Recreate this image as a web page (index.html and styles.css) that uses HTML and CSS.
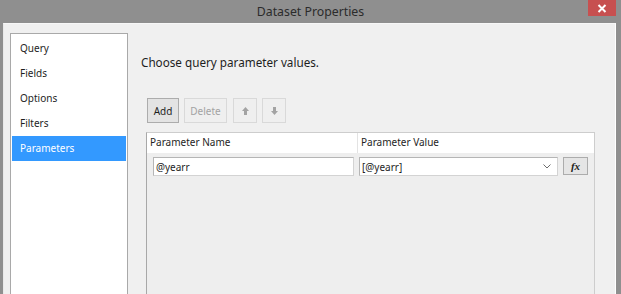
FILE: index.html
```html
<!DOCTYPE html>
<html lang="en">
<head>
    <meta charset="UTF-8">
    <title>Dataset Properties</title>
    <link rel="stylesheet" href="styles.css">
</head>
<body>
    <div class="window">
        <div class="titlebar">
            <span></span>
            <span class="title">Dataset Properties</span>
            <button class="close" title="Close">
                <svg width="10" height="9" viewBox="0 0 10 9"><path d="M1.5 1 L8.5 8 M8.5 1 L1.5 8" stroke="#fff" stroke-width="2"/></svg>
            </button>
        </div>
        <div class="dialog">
            <ul class="nav">
                <li>Query</li>
                <li>Fields</li>
                <li>Options</li>
                <li>Filters</li>
                <li class="active">Parameters</li>
            </ul>
            <div class="main">
                <h1 class="heading">Choose query parameter values.</h1>
                <div class="toolbar">
                    <button class="btn">Add</button>
                    <button class="btn disabled">Delete</button>
                    <button class="btn disabled icon">
                        <svg width="7" height="8" viewBox="0 0 7 8"><polygon points="3.5,0 7,4 5,4 5,8 2,8 2,4 0,4" fill="#a3a3a3"/></svg>
                    </button>
                    <button class="btn disabled icon">
                        <svg width="7" height="8" viewBox="0 0 7 8"><polygon points="3.5,8 7,4 5,4 5,0 2,0 2,4 0,4" fill="#a3a3a3"/></svg>
                    </button>
                </div>
                <div class="grid">
                    <div class="grid-head">
                        <div class="col-name">Parameter Name</div>
                        <div class="col-value">Parameter Value</div>
                    </div>
                    <div class="grid-row">
                        <div class="col-name"><input class="field" type="text" value="@yearr"></div>
                        <div class="col-value">
                            <div class="combo">
                                <span>[@yearr]</span>
                                <svg width="8" height="5" viewBox="0 0 8 5"><path d="M0.5 0.5 L4 4 L7.5 0.5" fill="none" stroke="#6d6d6d" stroke-width="1"/></svg>
                            </div>
                            <button class="fx">fx</button>
                        </div>
                    </div>
                </div>
            </div>
        </div>
    </div>
</body>
</html>
```

FILE: styles.css
```css
body {
    margin: 0;
    background-color: #8f8f8f;
    font-family: "Noto Sans", "Open Sans", sans-serif;
    font-size: 10px;
    color: #1e1e1e;
    width: 621px;
    height: 294px;
    overflow: hidden;
}
.window {
    display: flex;
    flex-direction: column;
    height: 294px;
}
.titlebar {
    display: grid;
    grid-template-columns: 1fr auto 1fr;
    height: 23px;
    flex-shrink: 0;
}
.title {
    font-size: 12.3px;
    line-height: 23px;
    color: #2b2b2b;
}
.close {
    justify-self: end;
    align-self: start;
    margin-right: 5px;
    width: 28px;
    height: 16px;
    padding: 0;
    border: none;
    background: #c75050;
    display: flex;
    align-items: center;
    justify-content: center;
}
.dialog {
    flex: 1;
    min-height: 0;
    display: flex;
    margin: 0 5px 0 3px;
    background: #f0f0f0;
    border-top: 1px solid #f7f7f7;
    border-right: 1px solid #ffffff;
    border-left: 1px solid #e9e9e9;
}
.nav {
    list-style: none;
    margin: 9px 0 0 6px;
    padding: 2px 1px 0 1px;
    width: 114px;
    background: #ffffff;
    border: 1px solid #a9a9a9;
    border-bottom: none;
}
.nav li {
    height: 25px;
    line-height: 24px;
    padding-left: 8px;
}
.nav li.active {
    background: #3399ff;
    color: #ffffff;
}
.main {
    flex: 1;
    display: flex;
    flex-direction: column;
    padding: 30px 0 0 13px;
}
.heading {
    margin: 0;
    font-size: 11.7px;
    font-weight: normal;
    line-height: 16px;
    color: #1e1e1e;
}
.toolbar {
    display: flex;
    margin: 28px 0 0 6px;
}
.btn {
    height: 25px;
    padding: 0 5px;
    margin-right: 5px;
    font-family: inherit;
    font-size: 10px;
    color: #1e1e1e;
    background: #e3e3e3;
    border: 1px solid #acacac;
}
.btn.disabled {
    color: #a3a3a3;
    background: #efefef;
    border-color: #d9d9d9;
}
.btn.icon {
    width: 24px;
    padding: 0;
    display: flex;
    align-items: center;
    justify-content: center;
}
.btn:nth-child(2) {
    width: 43px;
    margin-right: 6px;
}
.btn:first-child {
    width: 32px;
}
.grid {
    flex: 1;
    margin: 9px 0 0 5px;
    width: 447px;
    background: #eeeeee;
    border: 1px solid #cdcdcd;
    border-left-color: #a8a8a8;
    border-bottom: none;
}
.grid-head {
    display: flex;
    height: 20px;
    line-height: 19px;
    background: #ffffff;
}
.grid-head .col-name {
    width: 207px;
    padding-left: 3px;
    border-right: 1px solid #e3e3e3;
}
.grid-head .col-value {
    padding-left: 3px;
}
.grid-row {
    display: flex;
    padding-top: 4px;
}
.grid-row .col-name {
    width: 206px;
    padding-left: 6px;
}
.grid-row .col-value {
    display: flex;
    gap: 5px;
}
.field {
    box-sizing: border-box;
    width: 201px;
    height: 19px;
    margin: 0;
    padding: 0 2px;
    font-family: inherit;
    font-size: 10px;
    color: #1e1e1e;
    background: #ffffff;
    border: 1px solid #b5b5b5;
    border-color: #b5b5b5 #d3d3d3 #d3d3d3 #b5b5b5;
    outline: none;
}
.combo {
    box-sizing: border-box;
    width: 199px;
    height: 19px;
    padding: 0 6px 0 2px;
    display: flex;
    align-items: center;
    justify-content: space-between;
    background: #ffffff;
    border: 1px solid #b5b5b5;
    border-color: #b5b5b5 #d3d3d3 #d3d3d3 #b5b5b5;
}
.fx {
    width: 25px;
    height: 18px;
    padding: 0;
    font-family: "Liberation Serif", serif;
    font-size: 11px;
    font-weight: bold;
    font-style: italic;
    color: #1e1e1e;
    background: #e5e5e5;
    border: 1px solid #acacac;
}
```
